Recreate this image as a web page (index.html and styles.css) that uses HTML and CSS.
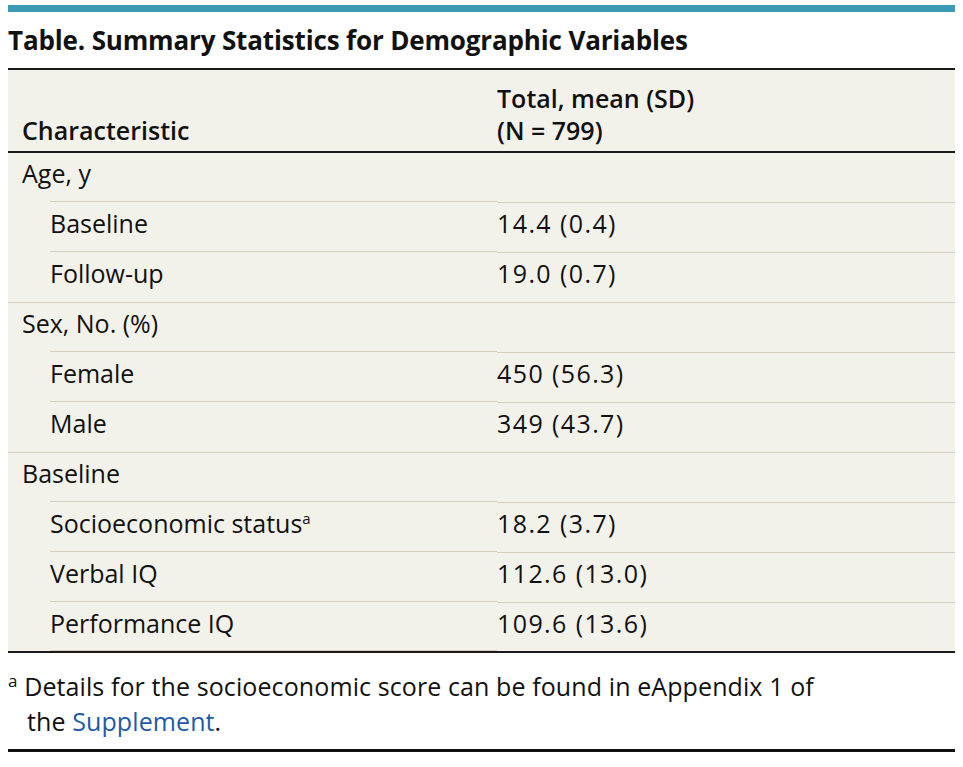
FILE: index.html
```html
<!DOCTYPE html>
<html>
<head>
<meta charset="utf-8">
<link rel="stylesheet" href="styles.css">
</head>
<body>
<div class="figure">
  <div class="title">Table. Summary Statistics for Demographic Variables</div>
  <table class="stats">
    <colgroup>
      <col class="col1">
      <col class="col2">
    </colgroup>
    <thead>
      <tr>
        <th class="c1">Characteristic</th>
        <th class="c2">Total, mean (SD)<br>(N = 799)</th>
      </tr>
    </thead>
    <tbody>
      <tr class="cat"><td class="c1">Age, y</td><td class="c2"></td></tr>
      <tr class="sub"><td class="c1">Baseline</td><td class="c2">14.4 (0.4)</td></tr>
      <tr class="sub last"><td class="c1">Follow-up</td><td class="c2">19.0 (0.7)</td></tr>
      <tr class="cat"><td class="c1">Sex, No. (%)</td><td class="c2"></td></tr>
      <tr class="sub"><td class="c1">Female</td><td class="c2">450 (56.3)</td></tr>
      <tr class="sub last"><td class="c1">Male</td><td class="c2">349 (43.7)</td></tr>
      <tr class="cat"><td class="c1">Baseline</td><td class="c2"></td></tr>
      <tr class="sub"><td class="c1">Socioeconomic status<sup>a</sup></td><td class="c2">18.2 (3.7)</td></tr>
      <tr class="sub"><td class="c1">Verbal IQ</td><td class="c2">112.6 (13.0)</td></tr>
      <tr class="sub end"><td class="c1">Performance IQ</td><td class="c2">109.6 (13.6)</td></tr>
    </tbody>
  </table>
  <div class="notes">
    <p class="note"><sup>a</sup> Details for the socioeconomic score can be found in eAppendix 1 of<br>the <a href="#">Supplement</a>.</p>
  </div>
</div>
</body>
</html>
```
FILE: styles.css
```css
html, body {
  margin: 0;
  padding: 0;
  background: #ffffff;
}
body {
  padding: 0 8px;
  font-family: "Open Sans", "Liberation Sans", sans-serif;
  color: #111;
}
.figure {
  margin-top: 5px;
  border-top: 7px solid #3b9bb4;
}
.title {
  font-weight: 700;
  font-size: 26px;
  line-height: 30px;
  padding-top: 13px;
  padding-bottom: 13px;
  letter-spacing: -0.15px;
}
.stats {
  width: 100%;
  table-layout: fixed;
  border-collapse: collapse;
  background: #f3f2ea;
  border-top: 2px solid #1a1a1a;
  border-bottom: 2px solid #1a1a1a;
  font-size: 25px;
}
.col1 {
  width: 489px;
}
.stats th,
.stats td {
  box-sizing: border-box;
}
.stats th {
  font-weight: 600;
  text-align: left;
  vertical-align: bottom;
  line-height: 32px;
  padding: 12px 0 5px 0;
  border-bottom: 2px solid #1a1a1a;
}
.stats td {
  height: 50px;
  padding: 3px 0 0 0;
  line-height: 34px;
  vertical-align: top;
}
.stats td.c2 {
  letter-spacing: 1.4px;
}
.stats .c1 {
  padding-left: 14px;
}
.stats tr.sub td.c1 {
  padding-left: 42px;
}
.stats tr.cat td,
.stats tr.sub td {
  border-bottom: 1px solid #d5cfc2;
}
.stats tr.cat td.c1,
.stats tr.sub:not(.last) td.c1 {
  border-bottom: 1px solid transparent;
  background-image: linear-gradient(#d5cfc2, #d5cfc2);
  background-size: calc(100% - 42px) 1px;
  background-position: right bottom;
  background-repeat: no-repeat;
}
.stats tr.end td,
.stats tr.end td.c1 {
  border-bottom: none;
  background-image: none;
}
.stats sup {
  font-size: 15px;
  line-height: 0;
  vertical-align: 9px;
}
.notes {
  border-bottom: 3px solid #111;
  padding: 16px 0 10px 0;
}
.note {
  margin: 0;
  font-size: 25px;
  line-height: 35px;
  letter-spacing: 0.1px;
  padding-left: 19px;
  text-indent: -19px;
}
.note sup {
  font-size: 17px;
  line-height: 0;
  vertical-align: 9px;
}
.note a {
  color: #1f5aa8;
  text-decoration: none;
}
```
